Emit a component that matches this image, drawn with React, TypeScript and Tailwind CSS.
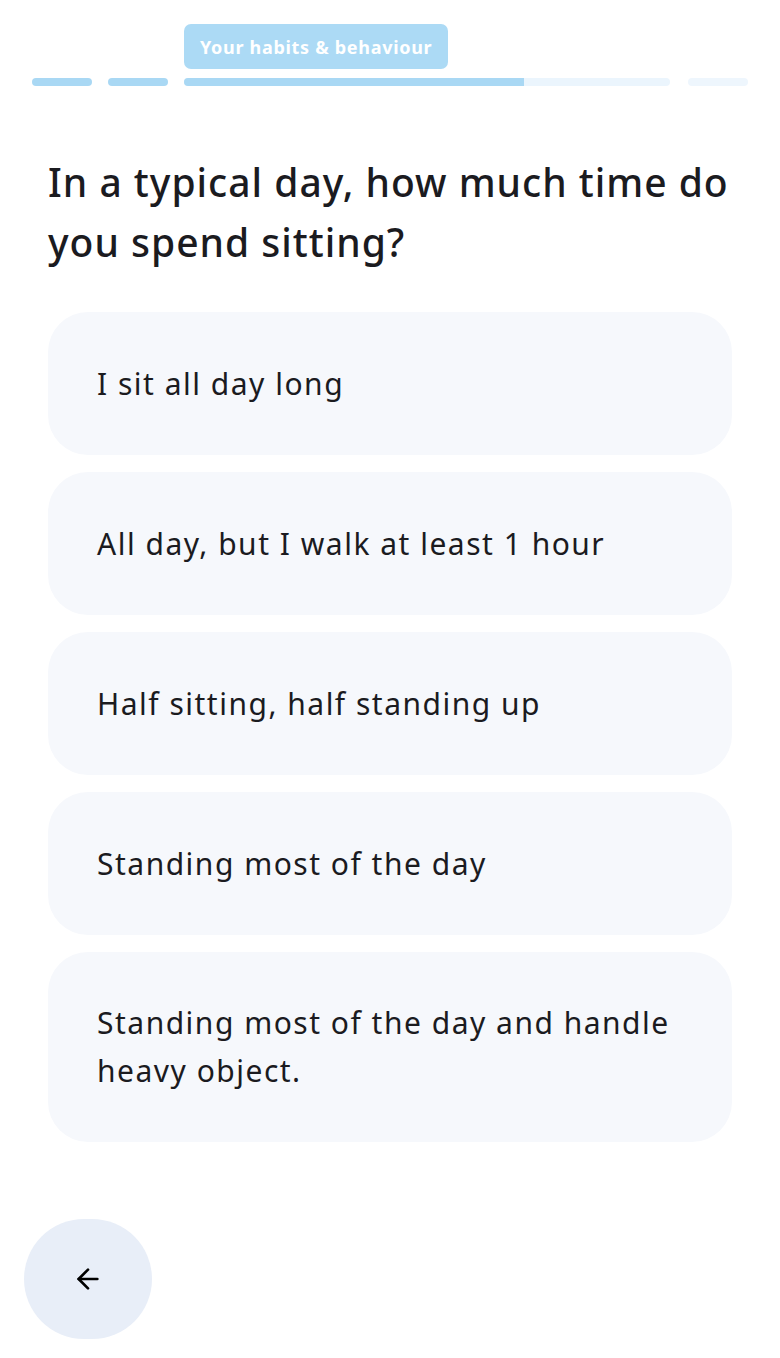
import { ArrowLeft } from 'lucide-react'

const options = [
  'I sit all day long',
  'All day, but I walk at least 1 hour',
  'Half sitting, half standing up',
  'Standing most of the day',
  'Standing most of the day and handle heavy object.',
]

export default function App() {
  return (
    <div
      className="min-h-[1358px] bg-white text-[#1b1b1f]"
      style={{ fontFamily: '"Noto Sans", Lato, sans-serif' }}
    >
      {/* progress */}
      <div className="flex items-end gap-[16px] px-[32px] pt-[24px]">
        <div className="h-[8px] w-[60px] rounded-full bg-[#a9d8f4]" />
        <div className="h-[8px] w-[60px] rounded-full bg-[#a9d8f4]" />
        <div className="flex w-[486px] flex-col items-start gap-[9px]">
          <span className="flex h-[45px] items-center rounded-[7px] bg-[#acdaf5] px-[16px] pt-[2px] text-[18px] font-bold tracking-[0.7px] text-white">
            Your habits &amp; behaviour
          </span>
          <div className="flex h-[8px] w-full overflow-hidden rounded-full bg-[#ebf5fd]">
            <div className="h-full w-[340px] bg-[#a9d8f4]" />
          </div>
        </div>
        <div className="ml-[2px] h-[8px] w-[60px] rounded-full bg-[#eef6fd]" />
      </div>

      <h1 className="mx-[48px] mt-[66px] text-[39px] font-medium leading-[60px] tracking-[1px]">
        In a typical day, how much time do you spend sitting?
      </h1>

      <div className="mx-[48px] mt-[40px] flex flex-col gap-[17px]">
        {options.map((o) => (
          <button
            key={o}
            className="flex min-h-[143px] items-center rounded-[40px] bg-[#f6f8fc] px-[49px] py-[47px] text-left text-[30px] leading-[48px] tracking-[1.5px]"
          >
            {o}
          </button>
        ))}
      </div>

      <button className="ml-[24px] mt-[77px] flex h-[120px] w-[128px] items-center justify-center rounded-full bg-[#e8eef8]">
        <ArrowLeft size={32} strokeWidth={2} className="text-black" />
      </button>
    </div>
  )
}
